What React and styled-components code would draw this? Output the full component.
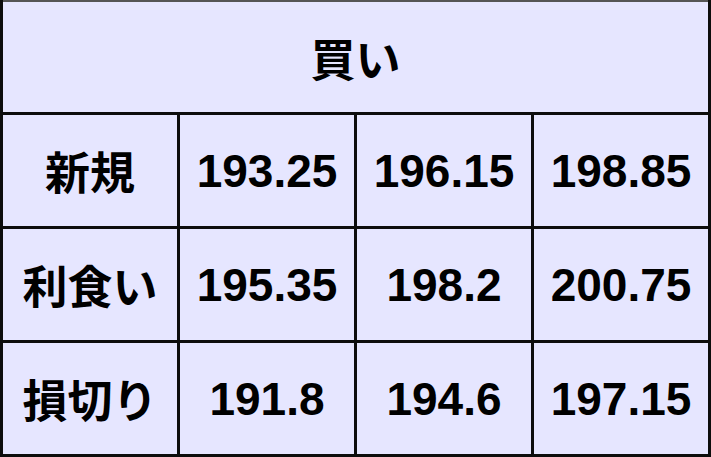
import React from 'react';
import styled, { createGlobalStyle } from 'styled-components';

const GlobalStyle = createGlobalStyle`
  html, body {
    margin: 0;
    padding: 0;
    background: #ffffff;
  }
  body {
    font-family: "Liberation Sans", "Noto Sans CJK JP", Arial, sans-serif;
  }
`;

const PriceTable = styled.table`
  width: 711px;
  height: 457px;
  border-collapse: collapse;
  table-layout: fixed;
  background-color: #e6e6ff;
  color: #000;
`;

const Cell = styled.td`
  border: 3px solid #0d0d0d;
  text-align: center;
  vertical-align: middle;
  padding: 0;
  font-size: ${props => (props.label ? '45px' : '46px')};
  font-weight: bold;
  font-family: ${props =>
    props.label
      ? '"Noto Sans CJK JP", "Liberation Sans", sans-serif'
      : '"Liberation Sans", Arial, sans-serif'};
  white-space: nowrap;
`;

const HeaderCell = styled(Cell)`
  border-top-width: 2px;
  border-top-color: #555;
`;

const rows = [
  { label: '新規', values: ['193.25', '196.15', '198.85'] },
  { label: '利食い', values: ['195.35', '198.2', '200.75'] },
  { label: '損切り', values: ['191.8', '194.6', '197.15'] },
];

const App = () => {
  return (
    <>
      <GlobalStyle />
      <PriceTable>
        <tbody>
          <tr>
            <HeaderCell colSpan={4} label>買い</HeaderCell>
          </tr>
          {rows.map(row => (
            <tr key={row.label}>
              <Cell label>{row.label}</Cell>
              {row.values.map(v => (
                <Cell key={v}>{v}</Cell>
              ))}
            </tr>
          ))}
        </tbody>
      </PriceTable>
    </>
  );
};

export default App;
